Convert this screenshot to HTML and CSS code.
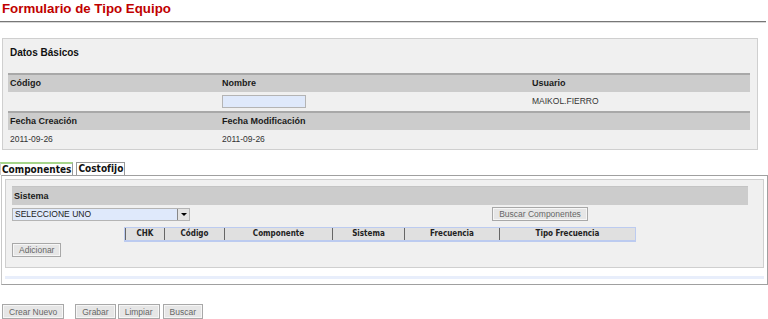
FILE: index.html
```html
<!DOCTYPE html>
<html lang="es">
<head>
    <meta charset="UTF-8">
    <title>Formulario de Tipo Equipo</title>
    <link rel="stylesheet" href="styles.css">
</head>
<body>
    <h1 class="title">Formulario de Tipo Equipo</h1>

    <div class="panel">
        <h2>Datos Básicos</h2>
        <table class="datos">
            <tr class="head">
                <td class="c1">Código</td>
                <td class="c2">Nombre</td>
                <td>Usuario</td>
            </tr>
            <tr>
                <td></td>
                <td><input type="text" class="txt"></td>
                <td>MAIKOL.FIERRO</td>
            </tr>
            <tr class="head">
                <td>Fecha Creación</td>
                <td>Fecha Modificación</td>
                <td></td>
            </tr>
            <tr>
                <td>2011-09-26</td>
                <td>2011-09-26</td>
                <td></td>
            </tr>
        </table>
    </div>

    <div class="tabs">
        <span class="tab active">Componentes</span>
        <span class="tab">Costofijo</span>
    </div>
    <div class="tab-panel">
        <div class="box">
            <div class="box-head">Sistema</div>
            <div class="box-row">
                <div class="select">
                    <span class="select-text">SELECCIONE UNO</span>
                    <span class="select-arrow"></span>
                </div>
                <button class="btn btn-buscar">Buscar Componentes</button>
            </div>
            <table class="grid">
                <tr>
                    <th class="g1">CHK</th>
                    <th class="g2">Código</th>
                    <th class="g3">Componente</th>
                    <th class="g4">Sistema</th>
                    <th class="g5">Frecuencia</th>
                    <th>Tipo Frecuencia</th>
                </tr>
            </table>
            <button class="btn">Adicionar</button>
        </div>
        <div class="strip"></div>
    </div>

    <div class="actions">
        <button class="btn btn-first">Crear Nuevo</button>
        <button class="btn">Grabar</button>
        <button class="btn">Limpiar</button>
        <button class="btn btn-last">Buscar</button>
    </div>
</body>
</html>
```

FILE: styles.css
```css
body {
    margin: 0;
    font-family: "Liberation Sans", Arial, sans-serif;
    font-size: 8.5px;
    color: #222;
    background-color: #ffffff;
}
.title {
    margin: 0 2px 0 0;
    padding: 0 0 3px 2px;
    height: 18px;
    line-height: 18px;
    font-size: 13.3px;
    font-weight: bold;
    color: #c00000;
    border-bottom: 1px solid #777;
    box-shadow: 0 1px 0 #d8d8d8;
}
.panel {
    margin: 16px 10px 0 2px;
    padding: 0 7px 0 5px;
    background-color: #f0f0f0;
    border: 1px solid #cfcfcf;
}
.panel h2 {
    margin: 0 0 14px 0;
    padding: 7px 2px 0;
    line-height: 13px;
    font-size: 10px;
    font-weight: bold;
    color: #111;
}
.datos {
    width: 100%;
    border-collapse: separate;
    border-spacing: 0;
}
.datos td {
    height: 19px;
    padding: 0 2px;
    line-height: 11px;
    color: #333;
}
.datos .c1 {
    width: 208px;
}
.datos .c2 {
    width: 306px;
}
.datos .head td {
    height: 17px;
    background-color: #cccccc;
    border-top: 2px solid #a8a8a8;
    font-size: 9px;
    font-weight: bold;
    color: #1a1a1a;
}
.txt {
    display: block;
    width: 84px;
    height: 13px;
    margin: 0;
    padding: 0;
    box-sizing: border-box;
    border: 1px solid #b4b4b4;
    background-color: #dfe9fb;
}
.tabs {
    display: flex;
    gap: 3px;
    margin-top: 12px;
    height: 13px;
}
.tab {
    display: block;
    height: 13px;
    padding: 0 1px;
    line-height: 12px;
    box-sizing: border-box;
    font-family: "DejaVu Sans", Tahoma, sans-serif;
    font-stretch: condensed;
    font-size: 10px;
    font-weight: bold;
    color: #111;
    background-color: #ffffff;
    border: 1px solid #999;
    border-bottom: none;
}
.tab.active {
    border-top: 2px solid #a6d58a;
    border-color: #a6d58a #999 #999 #ccc;
}
.tab-panel {
    margin: 0 0 0 1px;
    padding: 3px 3px 5px 3px;
    border: 1px solid #a0a0a0;
    border-left-color: #c8c8c8;
}
.box {
    padding: 6px 15px 10px 6px;
    background-color: #f0f0f0;
    border: 1px solid #cfcfcf;
}
.box-head {
    height: 18px;
    padding-left: 2px;
    line-height: 18px;
    background-color: #cccccc;
    border-top: 1px solid #c4c4c4;
    font-size: 9px;
    font-weight: bold;
    color: #1a1a1a;
}
.box-row {
    display: flex;
    align-items: center;
    margin-top: 2px;
}
.select {
    display: flex;
    width: 178px;
    height: 13px;
    box-sizing: border-box;
    border: 1px solid #b4b4b4;
    background-color: #dfe9fb;
}
.select-text {
    flex: 1;
    padding-left: 2px;
    line-height: 11px;
    color: #222;
}
.select-arrow {
    position: relative;
    width: 11px;
    background-color: #e4e4e4;
    border-left: 1px solid #888;
}
.select-arrow::after {
    content: "";
    position: absolute;
    left: 3px;
    top: 4px;
    border-left: 3px solid transparent;
    border-right: 3px solid transparent;
    border-top: 3px solid #000;
}
.btn {
    height: 14px;
    margin: 0;
    padding: 0 6px;
    font-family: "Liberation Sans", Arial, sans-serif;
    font-size: 8.5px;
    line-height: 12px;
    white-space: nowrap;
    color: #666;
    background-color: #e6e6e6;
    border: 1px solid #a8a8a8;
    box-shadow: inset 0 0 0 1px #f6f6f6;
    border-radius: 0;
}
.btn-buscar {
    margin-left: 302px;
    width: 96px;
    padding: 0;
}
.grid {
    margin: 6px auto 1px;
    width: 512px;
    border-collapse: separate;
    border-spacing: 0;
    border: 1px solid #bccbf0;
    border-width: 1px 1px 2px 1px;
}
.grid th {
    height: 12px;
    padding: 0;
    font-family: "DejaVu Sans", Tahoma, sans-serif;
    font-stretch: condensed;
    font-size: 8px;
    font-weight: bold;
    line-height: 12px;
    color: #222;
    background-color: #e0e0e0;
    border-left: 1px solid #666;
}
.grid .g1 { width: 38px; }
.grid .g2 { width: 59px; }
.grid .g3 { width: 107px; }
.grid .g4 { width: 71px; }
.grid .g5 { width: 94px; }
.strip {
    height: 3px;
    margin-top: 8px;
    background-color: #e8eefb;
}
.actions {
    display: flex;
    gap: 2px;
    margin: 19px 0 0 2px;
}
.actions .btn {
    height: 15px;
}
.actions .btn-first {
    margin-right: 9px;
}
.actions .btn-last {
    margin-left: 1px;
}
```
